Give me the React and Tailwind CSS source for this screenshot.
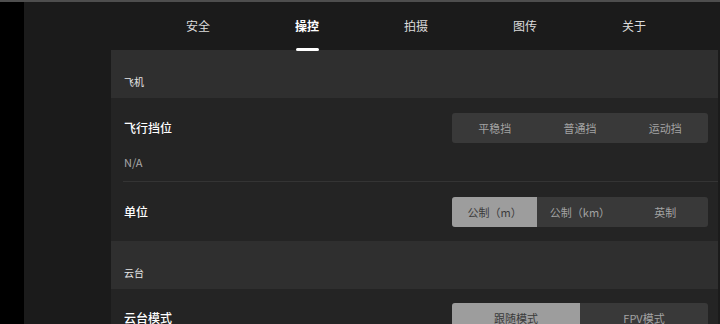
import { useState } from 'react'

const tabs = ['安全', '操控', '拍摄', '图传', '关于']

function Segmented({ options, value, onChange }) {
  return (
    <div className="flex h-[30px] w-[256px] overflow-hidden rounded-[3px] bg-[#393939]">
      {options.map((o, i) => (
        <button
          key={o}
          onClick={() => onChange(i)}
          className={`flex flex-1 items-center justify-center text-[11px] ${
            value === i ? 'bg-[#9d9d9d] text-[#3a3a3a]' : 'text-[#a3a3a3]'
          }`}
        >
          {o}
        </button>
      ))}
    </div>
  )
}

function SectionHeader({ title }) {
  return (
    <div className="flex h-[48px] items-end bg-[#2f2f2f] pb-[9px] pl-[13px]">
      <span className="text-[10px] leading-[14px] text-[#e6e6e6]">{title}</span>
    </div>
  )
}

export default function App() {
  const [tab, setTab] = useState(1)
  const [gear, setGear] = useState(-1)
  const [unit, setUnit] = useState(0)
  const [gimbal, setGimbal] = useState(0)

  return (
    <div
      className="flex h-[324px] w-[720px] overflow-hidden border-t-2 border-[#4e4e4e] bg-[#1b1b1b]"
      style={{ fontFamily: '"Noto Sans CJK SC", "Noto Sans", sans-serif' }}
    >
      <div className="w-[24px] shrink-0 bg-black" />

      <div className="flex min-w-0 flex-1 flex-col">
        {/* 顶部标签 */}
        <div className="flex h-[48px] shrink-0 items-start gap-[85px] pl-[162px] pt-[16px]">
          {tabs.map((t, i) => (
            <button
              key={t}
              onClick={() => setTab(i)}
              className="relative flex flex-col items-center"
            >
              <span
                className={`text-[12px] leading-[16px] ${
                  tab === i ? 'font-bold text-white' : 'text-[#dcdcdc]'
                }`}
              >
                {t}
              </span>
              {tab === i && (
                <span className="absolute top-[30px] h-[3px] w-[23px] rounded-full bg-white" />
              )}
            </button>
          ))}
        </div>

        {/* 内容 */}
        <div className="ml-[87px] mr-[2px] flex flex-1 flex-col">
          <SectionHeader title="飞机" />

          <div className="bg-[#242424]">
            <div className="flex items-center justify-between pl-[13px] pr-[10px] pt-[15px]">
              <span className="text-[12px] font-medium text-white">飞行挡位</span>
              <Segmented
                options={['平稳挡', '普通挡', '运动挡']}
                value={gear}
                onChange={setGear}
              />
            </div>
            <div className="pb-[11px] pl-[13px] pt-[11px] text-[11px] leading-[16px] text-[#a8a8a8]">
              N/A
            </div>
            <div className="ml-[12px] h-px bg-[#343434]" />
            <div className="flex items-center justify-between pb-[14px] pl-[13px] pr-[10px] pt-[15px]">
              <span className="text-[12px] font-medium text-white">单位</span>
              <Segmented
                options={['公制（m）', '公制（km）', '英制']}
                value={unit}
                onChange={setUnit}
              />
            </div>
          </div>

          <SectionHeader title="云台" />

          <div className="flex-1 bg-[#242424]">
            <div className="flex items-center justify-between pl-[13px] pr-[10px] pt-[14px]">
              <span className="text-[12px] font-medium text-white">云台模式</span>
              <Segmented
                options={['跟随模式', 'FPV模式']}
                value={gimbal}
                onChange={setGimbal}
              />
            </div>
          </div>
        </div>
      </div>
    </div>
  )
}
